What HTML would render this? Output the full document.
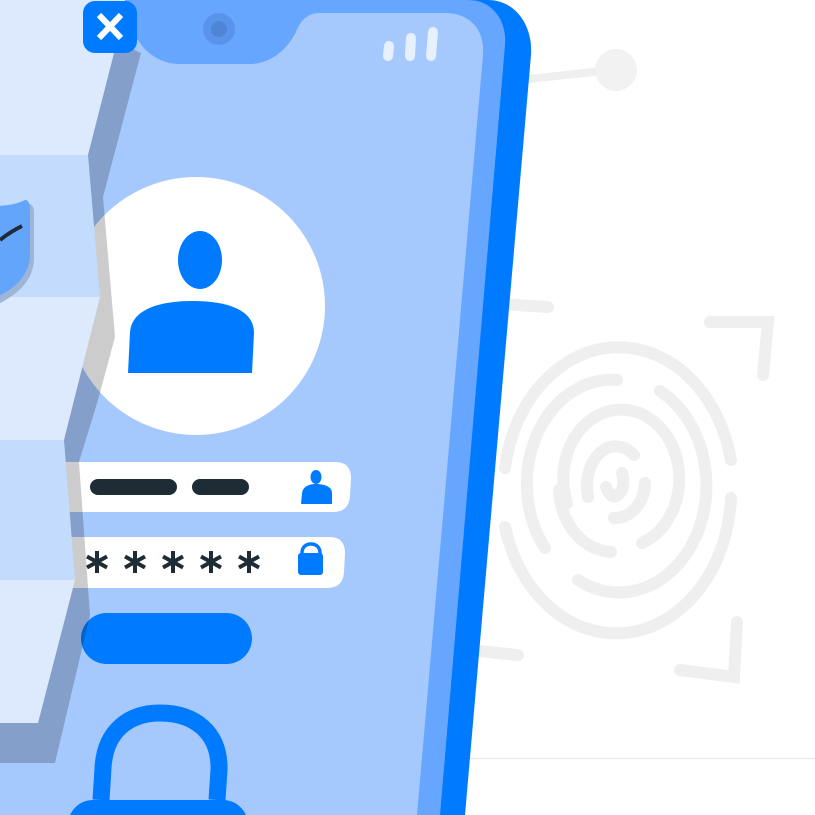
<!DOCTYPE html>
<html><head><meta charset="utf-8"><style>html,body{margin:0;padding:0;background:#fff;}svg{display:block}</style></head>
<body>
<svg width="815" height="815" viewBox="0 0 815 815" xmlns="http://www.w3.org/2000/svg">
<rect width="815" height="815" fill="#fff"/>
<line x1="460" y1="758.5" x2="815" y2="758.5" stroke="#ebebeb" stroke-width="1.5"/>
<line x1="520" y1="80" x2="612" y2="70" stroke="#efefef" stroke-width="8" stroke-linecap="round"/>
<circle cx="616" cy="70" r="21" fill="#f2f2f2"/>
<g fill="none" stroke="#efefef" stroke-width="12" stroke-linecap="round" stroke-linejoin="miter">
<path d="M505,468 A115,143 0 0 1 731,460"/>
<path d="M731,498 A115,143 0 0 1 505,527"/>
<path d="M617,380 A85,104 0 0 0 545,548"/>
<path d="M660,391 A85,104 0 0 1 578,580"/>
<path d="M567,503 A58,69 0 1 1 642,543"/>
<path d="M559,490 A55,65 0 0 0 611,552"/>
<path d="M588,497 A29,40 0 0 1 634,455"/>
<path d="M645,483 A30,36 0 0 1 614,518"/>
<path d="M606,487 Q611,500 618,495 Q626,488 622,473"/>
<path d="M500,304 L548,307"/>
<path d="M710,322 L768,322 L763,375" />
<path d="M737,622 L734,677 L680,670"/>
<path d="M470,650 L518,655"/>
</g>
<path d="M0,0 L488,0 C515,0 533,25 531,55 L465,815 L0,815 Z" fill="#007bff"/>
<path d="M0,0 L468,0 C492,0 507,20 505,45 L440,815 L0,815 Z" fill="#66a6ff"/>
<path d="M0,13 L445,13 C470,13 485,30 483,55 L417,815 L0,815 Z" fill="#a6c9fd"/>
<path d="M110,0 L330,0 L330,13 L318,13 C306,14 300,22 296,32 C287,50 270,64 250,64 L180,64 C160,64 145,52 138,40 L110,20 Z" fill="#66a6ff"/>
<circle cx="219" cy="29" r="16" fill="#5a93ec"/>
<circle cx="219" cy="29" r="8" fill="#4e85d4"/>
<g stroke="#e6f0fe" stroke-width="10" stroke-linecap="round">
<line x1="389" y1="46" x2="388" y2="56"/>
<line x1="411" y1="38" x2="410" y2="56"/>
<line x1="433" y1="32" x2="431" y2="56"/>
</g>
<circle cx="196" cy="306" r="129" fill="#fff"/>
<ellipse cx="200" cy="260" rx="22" ry="29" fill="#007bff"/>
<path d="M128,373 L130,332 C132,307 165,301 192,301 C228,301 254,310 254,333 L252,373 Z" fill="#007bff"/>
<path d="M40,462 L335,462 Q351,462 351,478 L350,496 Q349,512 333,512 L40,512 Z" fill="#fff"/>
<rect x="90" y="479" width="87" height="16" rx="8" fill="#1e2d35"/>
<rect x="192" y="479" width="57" height="16" rx="8" fill="#1e2d35"/>
<ellipse cx="316" cy="477" rx="5.5" ry="7" fill="#007bff"/>
<path d="M301,504 L302,493 C303,486 310,484 316,484 C325,484 332,487 332,493 L332,504 Z" fill="#007bff"/>
<path d="M40,537 L329,537 Q345,537 345,553 L344,572 Q343,588 327,588 L40,588 Z" fill="#fff"/>
<g stroke="#1e2d35" stroke-width="4" stroke-linecap="butt">
<g transform="translate(97,562)"><line x1="0" y1="-11" x2="0" y2="11"/><line x1="-10" y1="-5.5" x2="10" y2="5.5"/><line x1="-10" y1="5.5" x2="10" y2="-5.5"/></g>
<g transform="translate(135,562)"><line x1="0" y1="-11" x2="0" y2="11"/><line x1="-10" y1="-5.5" x2="10" y2="5.5"/><line x1="-10" y1="5.5" x2="10" y2="-5.5"/></g>
<g transform="translate(173,562)"><line x1="0" y1="-11" x2="0" y2="11"/><line x1="-10" y1="-5.5" x2="10" y2="5.5"/><line x1="-10" y1="5.5" x2="10" y2="-5.5"/></g>
<g transform="translate(211,562)"><line x1="0" y1="-11" x2="0" y2="11"/><line x1="-10" y1="-5.5" x2="10" y2="5.5"/><line x1="-10" y1="5.5" x2="10" y2="-5.5"/></g>
<g transform="translate(249,562)"><line x1="0" y1="-11" x2="0" y2="11"/><line x1="-10" y1="-5.5" x2="10" y2="5.5"/><line x1="-10" y1="5.5" x2="10" y2="-5.5"/></g>
</g>
<path d="M302,556 L302,553 C302,547 306,544 311,544 C316,544 320,547 320,553 L320,556" fill="none" stroke="#007bff" stroke-width="3.5"/>
<rect x="298" y="553" width="25" height="22" rx="3" fill="#007bff"/>
<rect x="81" y="613" width="171" height="51" rx="25.5" fill="#007bff"/>
<path d="M101,800 L103,768 C105,730 130,713 160,713 C195,713 220,733 219,770 L217,800" fill="none" stroke="#007bff" stroke-width="17"/>
<rect x="68" y="800" width="180" height="50" rx="25" fill="#007bff"/>
<polygon points="0,40 114,40 141,53 103,197 115,337 98,400 79,462 90,615 55,763 0,763" fill="#000" fill-opacity="0.2"/>
<clipPath id="pc"><polygon points="0,0 125,0 114,53 88,155 100,297 64,440 75,580 38,723 0,723"/></clipPath>
<g clip-path="url(#pc)">
<rect x="0" y="0" width="200" height="155" fill="#dde9fd"/>
<rect x="0" y="155" width="200" height="142" fill="#c3dbfd"/>
<rect x="0" y="297" width="200" height="143" fill="#dde9fd"/>
<rect x="0" y="440" width="200" height="140" fill="#c3dbfd"/>
<rect x="0" y="580" width="200" height="143" fill="#dde9fd"/>
<path d="M-16,209 Q12,212 29,204 Q34,204 34,214 L34,258 Q34,288 -6,306 L-16,306 Z" fill="#9fb5d6"/>
<path d="M-20,205 Q10,208 25,200 Q30,200 30,210 L30,254 Q30,284 -10,300 L-20,300 Z" fill="#64a5fc"/>
<path d="M0,240 Q10,232 22,226" fill="none" stroke="#1e2d35" stroke-width="4"/>
</g>
<rect x="83" y="1" width="54" height="52" rx="12" fill="#007bff"/>
<g stroke="#fff" stroke-width="6"><line x1="99" y1="15" x2="121" y2="38"/><line x1="121" y1="15" x2="99" y2="38"/></g>
</svg>
</body></html>
